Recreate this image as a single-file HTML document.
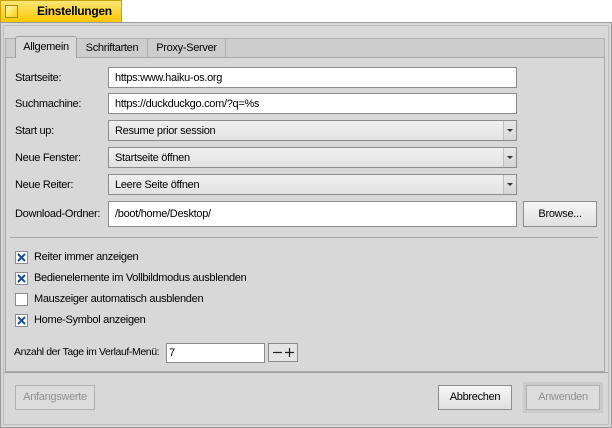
<!DOCTYPE html><html><head><meta charset="utf-8"><style>
*{box-sizing:border-box}
body{margin:0;width:612px;height:428px;background:#fff;font-family:"Liberation Sans","DejaVu Sans",sans-serif;font-size:11px;letter-spacing:-0.3px;color:#000;position:relative;overflow:hidden}
.a{position:absolute;white-space:nowrap}
.lbl{position:absolute;left:15px;line-height:14px}
.in{position:absolute;background:#fff;border:1px solid #8c8c8c;padding-left:6px;line-height:20px}
.dd{position:absolute;border:1px solid #8c8c8c;background:linear-gradient(#f0f0f0,#e2e2e2);padding-left:6px;line-height:20px}
.dd:after{content:"";position:absolute;right:0;top:0;width:12px;height:100%;border-left:1px solid #c0c0c0;background:linear-gradient(#e8e8e8,#d6d6d6)}
.dd i{position:absolute;right:3px;top:8px;width:0;height:0;border-left:3px solid transparent;border-right:3px solid transparent;border-top:3px solid #333;z-index:2}
.btn{position:absolute;border:1px solid #8c8c8c;background:linear-gradient(#f6f6f6,#e0e0e0);text-align:center}
.cb{position:absolute;left:15px;width:13px;height:13px;border:1px solid #8c8c8c;background:#fff}
.cb svg{position:absolute;left:1px;top:1px}
</style></head><body>
<div class="a" style="left:0;top:0;width:122px;height:22px;background:linear-gradient(#ffe676,#f8c800);border:1px solid #c8a000;border-bottom:none"></div>
<div class="a" style="left:5px;top:5px;width:13px;height:13px;border:1px solid #b08800;background:linear-gradient(135deg,#fff8c0,#f8d000)"></div>
<div class="a" style="left:37px;top:4px;font-weight:bold;font-size:12px">Einstellungen</div>
<div class="a" style="left:0;top:22px;width:612px;height:406px;background:#d8d8d8;border:1px solid #9a9a9a"></div>
<div class="a" style="left:3px;top:25px;width:606px;height:400px;border:1px solid #bdbdbd"></div>
<div class="a" style="left:5px;top:38px;width:600px;height:20px;background:#cdcdcd;border:1px solid #b0b0b0;border-bottom:none"></div>
<div class="a" style="left:5px;top:57px;width:600px;height:315px;border:1px solid #a8a8a8"></div>
<div class="a" style="left:15px;top:36px;width:62px;height:22px;background:#d8d8d8;border:1px solid #a0a0a0;border-bottom:none;border-radius:3px 3px 0 0;text-align:center;line-height:20px">Allgemein</div>
<div class="a" style="left:77px;top:39px;width:71px;height:18px;border-right:1px solid #b0b0b0;text-align:center;line-height:18px">Schriftarten</div>
<div class="a" style="left:148px;top:39px;width:78px;height:18px;border-right:1px solid #b0b0b0;text-align:center;line-height:18px">Proxy-Server</div>

<div class="lbl" style="top:71px">Startseite:</div><div class="in" style="left:108px;top:67px;width:409px;height:21px">https:www.haiku-os.org</div>
<div class="lbl" style="top:97px">Suchmachine:</div><div class="in" style="left:108px;top:93px;width:409px;height:21px">https://duckduckgo.com/?q=%s</div>
<div class="lbl" style="top:124px">Start up:</div><div class="dd" style="left:108px;top:120px;width:409px;height:21px">Resume prior session<i></i></div>
<div class="lbl" style="top:151px">Neue Fenster:</div><div class="dd" style="left:108px;top:147px;width:409px;height:21px">Startseite öffnen<i></i></div>
<div class="lbl" style="top:178px">Neue Reiter:</div><div class="dd" style="left:108px;top:174px;width:409px;height:21px">Leere Seite öffnen<i></i></div>
<div class="lbl" style="top:207px">Download-Ordner:</div><div class="in" style="left:108px;top:201px;width:409px;height:26px;line-height:24px">/boot/home/Desktop/</div>
<div class="btn" style="left:523px;top:201px;width:74px;height:26px;line-height:24px">Browse...</div>
<div class="a" style="left:10px;top:237px;width:588px;height:1px;background:#a8a8a8"></div>

<div class="cb" style="top:251px"><svg width="9" height="9"><path d="M1 1L8 8M8 1L1 8" stroke="#1a4f9a" stroke-width="2"/></svg></div><div class="a" style="left:34px;top:251px">Reiter immer anzeigen</div>
<div class="cb" style="top:272px"><svg width="9" height="9"><path d="M1 1L8 8M8 1L1 8" stroke="#1a4f9a" stroke-width="2"/></svg></div><div class="a" style="left:34px;top:272px">Bedienelemente im Vollbildmodus ausblenden</div>
<div class="cb" style="top:293px"></div><div class="a" style="left:34px;top:293px">Mauszeiger automatisch ausblenden</div>
<div class="cb" style="top:314px"><svg width="9" height="9"><path d="M1 1L8 8M8 1L1 8" stroke="#1a4f9a" stroke-width="2"/></svg></div><div class="a" style="left:34px;top:314px">Home-Symbol anzeigen</div>
<div class="a" style="left:14px;top:346px;font-size:10.5px;letter-spacing:-0.4px">Anzahl der Tage im Verlauf-Menü:</div>
<div class="in" style="left:166px;top:343px;width:99px;height:20px;padding-left:2px;line-height:18px">7</div>
<div class="btn" style="left:268px;top:343px;width:30px;height:19px;background:#e4e4e4"><svg width="28" height="17"><path d="M4 8.5H13M16 8.5H25M20.5 4V13" stroke="#222" stroke-width="1.2"/></svg></div>

<div class="a" style="left:4px;top:372px;width:604px;height:1px;background:#a0a0a0"></div>
<div class="btn" style="left:15px;top:385px;width:80px;height:25px;line-height:23px;color:#909090;background:#dcdcdc;border-color:#b0b0b0">Anfangswerte</div>
<div class="btn" style="left:438px;top:385px;width:74px;height:25px;line-height:23px">Abbrechen</div>
<div class="a" style="left:523px;top:382px;width:80px;height:31px;background:#cacaca"></div>
<div class="btn" style="left:526px;top:385px;width:74px;height:25px;line-height:23px;color:#909090;background:#dcdcdc;border-color:#b0b0b0">Anwenden</div>
</body></html>
